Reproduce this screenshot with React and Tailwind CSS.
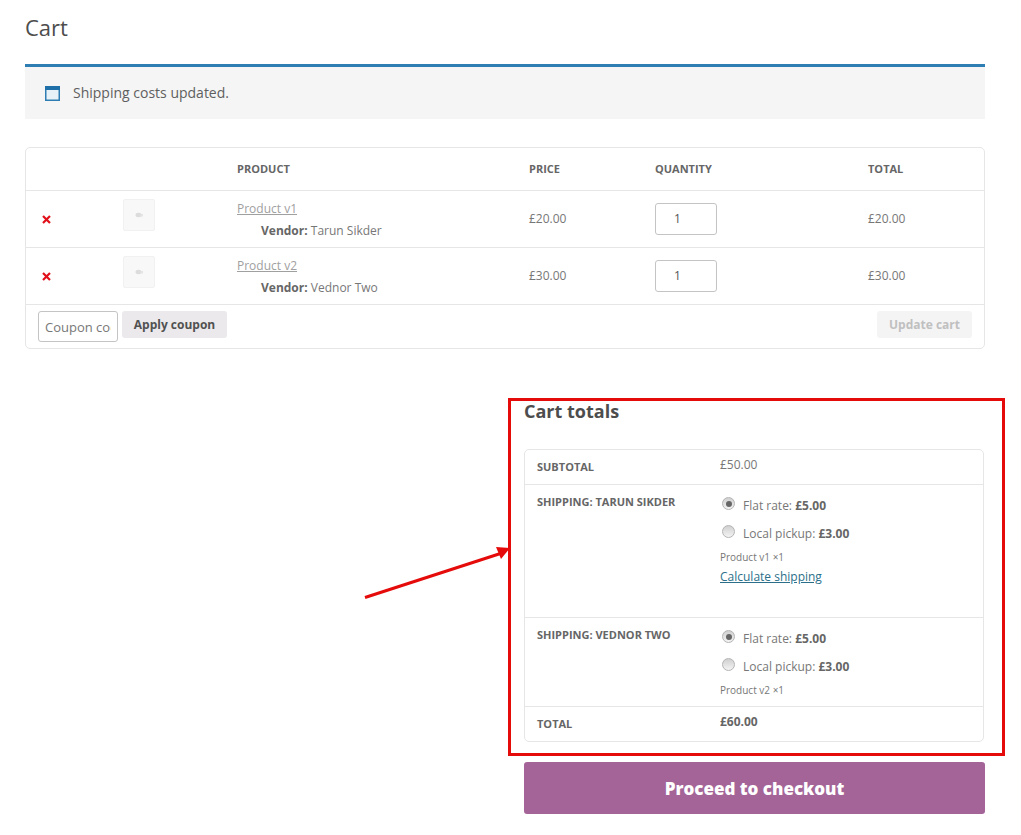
import React from "react";

const Radio = ({ checked }) => (
  <span className="w-[13px] h-[13px] rounded-full border border-[#b4b4b4] bg-gradient-to-b from-[#d0d0d0] to-[#f4f4f4] flex items-center justify-center shrink-0">
    {checked && <span className="w-[6px] h-[6px] rounded-full bg-[#666]" />}
  </span>
);

const Thumb = () => (
  <div className="w-8 h-8 self-start mt-2 bg-[#f8f8f8] border border-[#f1f1f1] rounded-[2px] flex items-center justify-center">
    <svg width="8" height="6" viewBox="0 0 8 6"><ellipse cx="3.5" cy="3" rx="3" ry="2.2" fill="#dcdcdc" /><rect x="5.5" y="2" width="2.5" height="2.5" fill="#e4e4e4" /></svg>
  </div>
);

const X = () => (
  <svg width="9" height="9" viewBox="0 0 9 9" className="block">
    <path d="M1 1 L8 8 M8 1 L1 8" stroke="#e2101a" strokeWidth="2.2" />
  </svg>
);

const Row = ({ name, vendor, price }) => (
  <div className="grid grid-cols-[97px_114px_292px_126px_213px_1fr] h-[57px] border-b border-[#e6e6e6] items-center">
    <div className="pl-4"><X /></div>
    <Thumb />
    <div className="text-[12px] leading-[22px] mt-[1px]">
      <a className="block underline text-[#a0a0a0]">{name}</a>
      <div className="pl-6 text-[#777]"><b className="font-bold text-[#666]">Vendor:</b> {vendor}</div>
    </div>
    <div className="text-[12px] text-[#777]">{price}</div>
    <div className="h-8 w-[62px] border border-[#c4c4c4] rounded-[3px] flex items-center pl-[18px] text-[12px] text-[#555]">1</div>
    <div className="text-[12px] text-[#777]">{price}</div>
  </div>
);

const Ship = ({ label, product, link, h }) => (
  <div className={`grid grid-cols-[183px_1fr] border-b border-[#e6e6e6] pl-3 ${h}`}>
    <div className="text-[11px] font-bold uppercase text-[#666] pt-[9px] leading-[16px]">{label}</div>
    <div>
      <div className="pl-[2px] pt-[12px] flex items-start gap-2 h-[28px] text-[12px] text-[#777]">
        <Radio checked />
        <span>Flat rate: <b className="text-[#666]">£5.00</b></span>
      </div>
      <div className="pl-[2px] pt-[12px] flex items-start gap-2 h-[28px] text-[12px] text-[#777]">
        <Radio />
        <span>Local pickup: <b className="text-[#666]">£3.00</b></span>
      </div>
      <div className="text-[10px] text-[#777] mt-[9px] leading-[14px]">{product}</div>
      {link && <a className="block text-[12px] underline text-[#2b6f8a] mt-[4px] leading-[18px]">Calculate shipping</a>}
    </div>
  </div>
);

export default function App() {
  return (
    <div className="relative w-[1021px] min-h-[835px] pl-[25px] pr-9 bg-white font-['Open_Sans',sans-serif] text-[#515151]">
      <h1 className="text-[22px] leading-[30px] pt-3 h-[64px] text-[#4d4d4d]">Cart</h1>

      <div className="h-[55px] border-t-[3px] border-[#2f7eb3] bg-[#f5f5f5] flex items-center pl-5 gap-[13px] text-[14px] text-[#5f5f5f]">
        <svg width="15" height="15" viewBox="0 0 15 15" className="block">
          <rect x="0.75" y="0.75" width="13.5" height="13.5" fill="#e6f1f8" stroke="#2f7eb3" strokeWidth="1.5" />
          <rect x="0" y="0" width="15" height="4" fill="#1f6fa8" />
        </svg>
        <span className="-mt-[2px]">Shipping costs updated.</span>
      </div>

      <div className="mt-7 border border-[#e6e6e6] rounded-[5px] h-[202px]">
        <div className="grid grid-cols-[97px_114px_292px_126px_213px_1fr] h-[43px] border-b border-[#e6e6e6] items-center text-[11px] font-bold uppercase text-[#666]">
          <div />
          <div />
          <div>Product</div>
          <div>Price</div>
          <div>Quantity</div>
          <div>Total</div>
        </div>
        <Row name="Product v1" vendor="Tarun Sikder" price="£20.00" />
        <Row name="Product v2" vendor="Vednor Two" price="£30.00" />
        <div className="flex justify-between pl-3 pr-3 pt-[6px]">
          <div className="flex items-start gap-1">
            <input placeholder="Coupon code" readOnly className="w-20 h-[31px] border border-[#c4c4c4] rounded-[3px] pl-[6px] pr-[6px] text-[13px] placeholder:text-[#777] outline-none" />
            <button className="w-[105px] h-[27px] rounded-[3px] bg-[#ebe9eb] text-[12px] font-bold text-[#515151]">Apply coupon</button>
          </div>
          <button className="w-[95px] h-[27px] rounded-[3px] bg-[#f5f4f5] text-[12px] font-bold text-[#c0c0c0]">Update cart</button>
        </div>
      </div>

      <div className="ml-[499px] mt-[50px]">
        <h2 className="text-[18px] font-bold leading-[24px] text-[#4d4d4d]">Cart totals</h2>
        <div className="mt-[26px] border border-[#e6e6e6] rounded-[5px] w-[460px] h-[293px]">
          <div className="grid grid-cols-[183px_1fr] pl-3 h-[35px] border-b border-[#e6e6e6]">
            <div className="text-[11px] font-bold uppercase text-[#666] pt-[9px] leading-[16px]">Subtotal</div>
            <div className="text-[12px] text-[#777] pt-[6px] leading-[18px]">£50.00</div>
          </div>
          <Ship label="Shipping: Tarun Sikder" product="Product v1 ×1" link h="h-[133px]" />
          <Ship label="Shipping: Vednor Two" product="Product v2 ×1" h="h-[89px]" />
          <div className="grid grid-cols-[183px_1fr] pl-3 h-[34px]">
            <div className="text-[11px] font-bold uppercase text-[#666] pt-[9px] leading-[16px]">Total</div>
            <div className="text-[12px] font-bold text-[#666] pt-[6px] leading-[18px]">£60.00</div>
          </div>
        </div>
        <button className="mt-5 w-[461px] h-[52px] pt-[1px] rounded-[3px] bg-[#a46497] text-white text-[17px] font-extrabold">Proceed to checkout</button>
      </div>

      <div className="absolute left-[508px] top-[398px] w-[497px] h-[358px] border-[3px] border-[#e60b0b] pointer-events-none" />
      <svg className="absolute left-[360px] top-[540px]" width="155" height="62" viewBox="0 0 155 62">
        <path d="M5 57.5 L142 13" stroke="#e60b0b" strokeWidth="3" />
        <path d="M150 8 L136 7 L141 19 Z" fill="#e60b0b" />
      </svg>
    </div>
  );
}
